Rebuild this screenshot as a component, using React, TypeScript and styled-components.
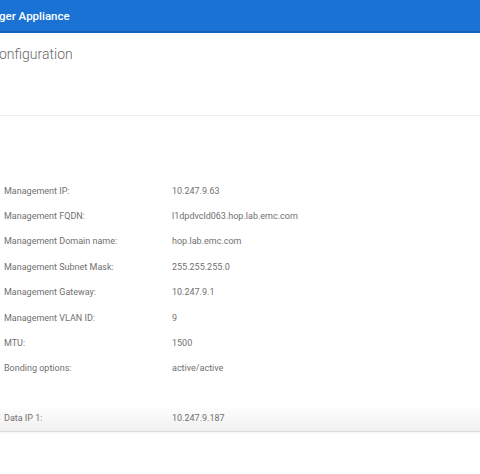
import React from 'react';
import styled, { createGlobalStyle } from 'styled-components';

const GlobalStyle = createGlobalStyle`
  html, body {
    margin: 0;
    padding: 0;
    background: #ffffff;
    font-family: Roboto, 'Liberation Sans', sans-serif;
  }
`;

type Row = { label: string; value: string };

const managementRows: Row[] = [
  { label: 'Management IP:', value: '10.247.9.63' },
  { label: 'Management FQDN:', value: 'l1dpdvcld063.hop.lab.emc.com' },
  { label: 'Management Domain name:', value: 'hop.lab.emc.com' },
  { label: 'Management Subnet Mask:', value: '255.255.255.0' },
  { label: 'Management Gateway:', value: '10.247.9.1' },
  { label: 'Management VLAN ID:', value: '9' },
  { label: 'MTU:', value: '1500' },
  { label: 'Bonding options:', value: 'active/active' },
];

const App: React.FC = () => (
  <>
    <GlobalStyle />
    <Page>
      <TopBar>
        <AppTitle>ger Appliance</AppTitle>
      </TopBar>
      <TitleArea>
        <PageTitle>onfiguration</PageTitle>
      </TitleArea>
      <Details>
        <Section>
          {managementRows.map(row => (
            <DetailRow key={row.label}>
              <Label>{row.label}</Label>
              <Value>{row.value}</Value>
            </DetailRow>
          ))}
        </Section>
        <Section>
          <DetailRow shaded>
            <Label>Data IP 1:</Label>
            <Value>10.247.9.187</Value>
          </DetailRow>
        </Section>
      </Details>
    </Page>
  </>
);

export default App;

const Page = styled.div`
  width: 480px;
  height: 474px;
  overflow: hidden;
  background: #ffffff;
`;

const TopBar = styled.header`
  height: 31px;
  background: #1a73d4;
  border-bottom: 2px solid #1560b8;
  display: flex;
  align-items: center;
`;

const AppTitle = styled.span`
  color: #ffffff;
  font-size: 11.5px;
  font-weight: 500;
  margin-left: -1px;
`;

const TitleArea = styled.div`
  height: 83px;
  border-bottom: 1px solid #ececec;
  padding-top: 12px;
  box-sizing: border-box;
`;

const PageTitle = styled.h1`
  margin: 0;
  font-size: 14px;
  font-weight: 300;
  color: #686868;
  margin-left: -1px;
  line-height: 18px;
`;

const Details = styled.div`
  padding-top: 62px;
  display: flex;
  flex-direction: column;
  gap: 24px;
`;

const Section = styled.div`
  display: flex;
  flex-direction: column;
`;

const DetailRow = styled.div<{ shaded?: boolean }>`
  display: grid;
  grid-template-columns: 168px 1fr;
  height: 25.4px;
  align-items: center;
  padding-left: 4px;
  ${({ shaded }) =>
    shaded &&
    `
    background: linear-gradient(#ffffff, #f0f0f0);
    border-bottom: 1px solid #dcdcdc;
    box-shadow: 0 1px 2px rgba(0, 0, 0, 0.06);
  `}
`;

const Label = styled.span`
  font-size: 9px;
  color: #707070;
`;

const Value = styled.span`
  font-size: 9px;
  color: #707070;
`;
